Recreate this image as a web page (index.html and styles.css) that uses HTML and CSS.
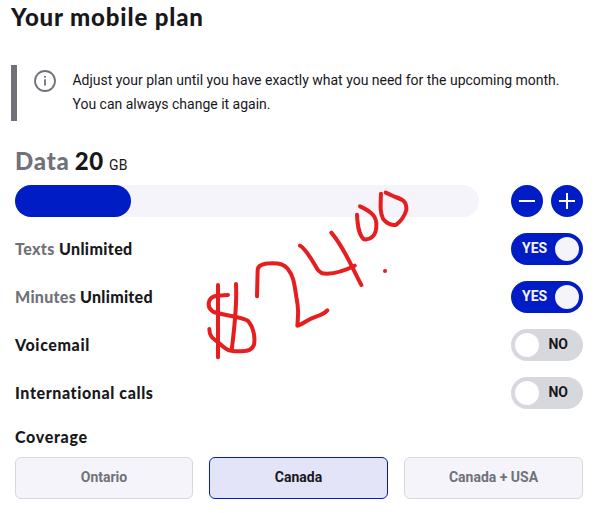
FILE: index.html
```html
<!DOCTYPE html>
<html lang="en">
<head>
<meta charset="utf-8">
<title>Your mobile plan</title>
<link rel="stylesheet" href="styles.css">
</head>
<body>
<main class="page">
  <h1 class="title">Your mobile plan</h1>
  <section class="notice">
    <svg class="info" viewBox="0 0 22 22" fill="none" stroke="#717179" stroke-width="1.8"><circle cx="11" cy="11" r="10"/><path d="M11 9.2V15.4M11 6V7.7"/></svg>
    <p class="notice-text">Adjust your plan until you have exactly what you need for the upcoming month.<br>You can always change it again.</p>
  </section>
  <section class="plan">
    <div class="data-label"><span class="muted data-name">Data</span><span class="amount">20</span><span class="unit">GB</span></div>
    <div class="data-row">
      <div class="track"><div class="fill"></div></div>
      <div class="steppers">
        <button class="step" aria-label="Less data"><svg viewBox="0 0 32 32"><path d="M8 16H24"/></svg></button>
        <button class="step" aria-label="More data"><svg viewBox="0 0 32 32"><path d="M8 16H24M16 8V24"/></svg></button>
      </div>
    </div>
    <div class="row"><span class="label texts"><span class="muted">Texts</span> Unlimited</span><button class="toggle on"><span>YES</span><i class="knob"></i></button></div>
    <div class="row"><span class="label minutes"><span class="muted">Minutes</span> Unlimited</span><button class="toggle on"><span>YES</span><i class="knob"></i></button></div>
    <div class="row"><span class="label voicemail">Voicemail</span><button class="toggle"><i class="knob"></i><span>NO</span></button></div>
    <div class="row"><span class="label international">International calls</span><button class="toggle"><i class="knob"></i><span>NO</span></button></div>
    <h2 class="label coverage">Coverage</h2>
    <div class="options">
      <button class="option">Ontario</button>
      <button class="option selected">Canada</button>
      <button class="option">Canada + USA</button>
    </div>
  </section>
  <svg class="ink" viewBox="0 0 660 570" role="img" aria-label="Handwritten price">
    <path d="M69 315V532"/>
    <path d="M123 312C126 370 119 440 110 510"/>
    <path d="M99 345L67 347C36 350 35 382 53 394C64 403 138 409 158 422C176 441 181 473 177 494C171 512 157 512 137 514C103 515 97 512 71 488C53 475 43 469 43 447"/>
    <path d="M186 349L188 270C189 253 210 250 231 250C256 250 266 253 278 266C296 288 298 312 304 350C311 386 310 402 307 437C320 435 331 423 350 415C370 407 384 405 397 391"/>
    <path d="M315 197C337 211 351 242 368 269C378 280 382 281 396 281C428 280 451 271 479 257"/>
    <path d="M409 158C449 205 466 253 499 315"/>
    <path d="M486 104C488 141 492 166 507 178C531 180 544 162 544 139C546 111 531 95 495 79"/>
    <path d="M558 41C556 86 556 99 564 116C574 129 589 137 604 134C616 125 629 107 634 90C636 64 622 58 601 51L572 38"/>
    <path d="M570 273h.1"/>
  </svg>
</main>
</body>
</html>
```
FILE: styles.css
```css
* { box-sizing: border-box; }
body { margin: 0; background: #fff; color: #18181b; font-family: Roboto, sans-serif; }
button { font: inherit; color: inherit; border: 0; padding: 0; }
.page { position: relative; width: 610px; height: 513px; padding: 2px 27px 0 11px; overflow: hidden; }
.title { margin: 0; height: 63px; font: 900 24px/30px Lato, sans-serif; letter-spacing: .85px; white-space: nowrap; }
.notice { display: flex; height: 56px; border-left: 6px solid #717179; padding: 3px 0 0 17px; }
.info { width: 22px; height: 22px; margin-top: 2px; flex: none; }
.notice-text { margin: 0 0 0 16.5px; font-size: 14px; line-height: 24px; letter-spacing: -.008px; white-space: nowrap; }
.plan { padding: 24px 0 0 4px; }
.muted { color: #717179; }
.data-label { display: flex; align-items: baseline; height: 40px; font: 900 24px/32px Lato, sans-serif; letter-spacing: .8px; }
.amount { margin-left: 5px; }
.unit { margin-left: 5px; padding-bottom: 1px; font: 400 14px Roboto, sans-serif; letter-spacing: 0; }
.data-row { display: flex; justify-content: space-between; margin-bottom: 16px; }
.track { width: 464px; height: 32px; border-radius: 16px; background: #f4f4fa; }
.fill { width: 116px; height: 32px; border-radius: 16px; background: #001cc4; }
.steppers { display: flex; gap: 8px; }
.step { width: 32px; height: 32px; border-radius: 50%; background: #001cc4; }
.step svg { display: block; stroke: #fff; stroke-width: 2; }
.row { display: flex; align-items: center; justify-content: space-between; height: 32px; margin-bottom: 16px; }
.label { font: 900 16px/24px Lato, sans-serif; letter-spacing: .38px; white-space: nowrap; }
.minutes { letter-spacing: .28px; }
.voicemail { letter-spacing: .6px; }
.international { letter-spacing: .6px; }
.toggle { display: flex; align-items: center; justify-content: space-between; width: 72px; height: 32px; padding: 0 4px; border-radius: 16px; background: #d7d7de; font: 700 14px/30px Roboto, sans-serif; }
.toggle span { padding: 0 11px 2px 0; }
.toggle.on { background: #001cc4; color: #f4f4fa; }
.toggle.on span { padding: 0 0 2px 7px; }
.knob { width: 24px; height: 24px; border-radius: 50%; background: #fff; }
.on .knob { background: #f4f4fa; }
.coverage { margin: 0 0 8px; letter-spacing: .7px; }
.options { display: grid; grid-template-columns: 178px 179px 179px; gap: 16px; }
.option { height: 42px; padding-bottom: 2px; border: 1px solid #d7d7de; border-radius: 6px; background: #f4f4fa; color: #717179; font-size: 14px; font-weight: 700; }
.option.selected { border-color: #001cc4; background: #e4e4f9; color: #18181b; }
.ink { position: absolute; left: 195px; top: 180px; width: 220px; height: 190px; fill: none; stroke: #e61e20; stroke-width: 12; stroke-linecap: round; stroke-linejoin: round; pointer-events: none; }
```
